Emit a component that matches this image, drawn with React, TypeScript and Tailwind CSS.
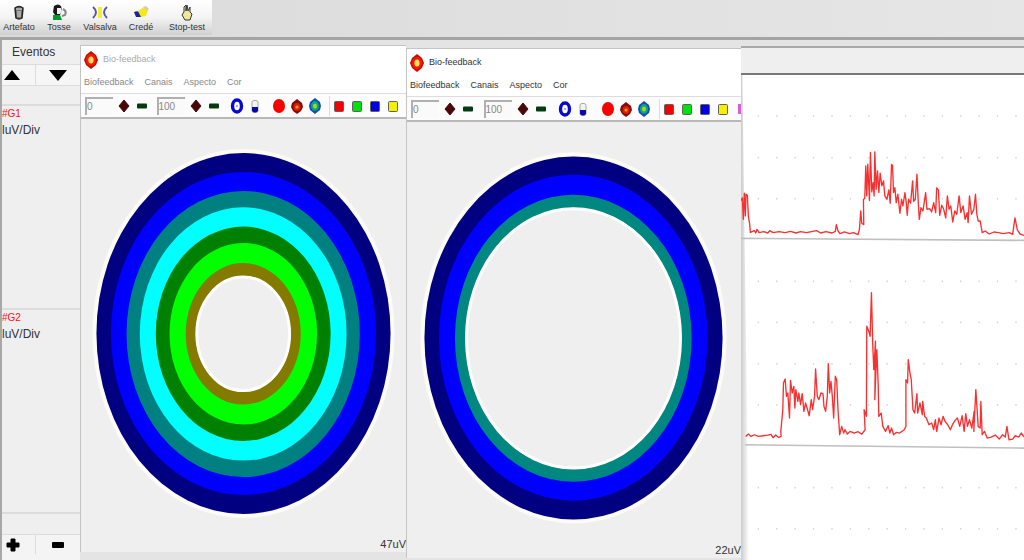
import type { ReactNode } from 'react'
import clsx from 'clsx'

type Ring = { cx: number; cy: number; rx: number; ry: number; fill: string }

const leftRings: Ring[] = [
  { cx: 163, cy: 214, rx: 147.5, ry: 181, fill: '#000080' },
  { cx: 163, cy: 214, rx: 133, ry: 162, fill: '#0000ff' },
  { cx: 162.7, cy: 214.5, rx: 117, ry: 143.5, fill: '#008080' },
  { cx: 162.7, cy: 214.5, rx: 103.7, ry: 127, fill: '#00ffff' },
  { cx: 162.7, cy: 214.3, rx: 87.7, ry: 107.5, fill: '#008000' },
  { cx: 162.8, cy: 214.3, rx: 74, ry: 91, fill: '#00ff00' },
  { cx: 162.7, cy: 214.3, rx: 57.7, ry: 71, fill: '#857a00' },
  { cx: 162.7, cy: 214.3, rx: 47.5, ry: 58, fill: '#efefef' },
]

const rightRings: Ring[] = [
  { cx: 167, cy: 216, rx: 149.5, ry: 182, fill: '#000080' },
  { cx: 166.8, cy: 215.7, rx: 134.7, ry: 163.5, fill: '#0000ff' },
  { cx: 166.8, cy: 216.3, rx: 118.7, ry: 144, fill: '#008880' },
  { cx: 167, cy: 216.3, rx: 108.3, ry: 131, fill: '#efefef' },
]

const channelOne =
  '36,484 40,476 43,540 46,462 49,530 51,465 55,468 58,530 62,555 64,579 76,574 80,581 84,570 90,580 104,577 116,581 122,574 132,580 150,577 168,580 184,576 200,581 214,577 232,580 250,576 262,574 274,581 290,577 308,581 318,576 321,556 326,575 332,583 345,578 360,583 372,580 386,586 390,570 394,515 397,552 403,556 402,480 406,478 409,380 412,470 415,375 420,484 423,340 427,458 431,430 434,470 436,338 440,450 444,395 448,460 452,402 457,440 462,425 466,470 472,480 478,452 482,492 486,376 489,378 492,460 496,445 500,490 505,465 511,522 516,480 520,500 526,460 530,490 533,528 537,480 543,492 549,425 552,486 557,480 562,405 566,490 569,540 574,505 580,515 588,460 592,510 600,508 606,518 612,490 618,520 621,446 626,452 630,528 636,498 642,510 648,536 653,470 658,510 663,500 669,548 675,515 681,525 688,470 693,520 700,500 706,540 712,520 715,550 719,470 725,525 732,510 737,465 741,525 745,545 751,545 757,580 766,575 778,584 792,578 806,580 820,583 838,580 848,585 855,536 862,572 870,584 882,588'

const channelTwo =
  '50,560 58,553 66,560 76,555 88,560 102,558 116,556 126,554 132,564 140,556 148,563 156,560 155,545 161,480 163,400 168,388 172,440 176,430 181,505 184,392 189,430 194,410 197,475 200,420 206,455 209,430 214,465 219,432 224,485 229,460 235,480 240,498 246,450 250,480 256,440 259,358 264,440 269,450 275,430 281,432 284,470 289,485 294,440 297,342 301,430 305,395 309,440 313,505 318,380 322,390 326,480 331,555 337,530 343,550 347,540 354,553 362,545 374,550 386,546 397,553 407,540 404,480 411,500 412,230 418,245 422,260 426,130 430,290 433,360 438,275 436,450 442,300 446,400 448,500 455,490 460,530 468,545 476,528 481,550 486,535 492,555 500,548 510,550 524,540 529,530 529,390 534,400 536,330 541,370 545,390 550,480 555,490 562,432 564,490 571,460 578,495 579,455 585,500 590,505 598,525 606,520 612,540 617,510 621,545 628,505 634,525 640,500 646,515 654,525 662,540 668,525 676,512 683,505 690,530 697,498 703,545 708,492 713,530 719,510 726,535 733,485 732,545 738,420 745,530 751,535 753,455 757,555 764,545 772,565 784,562 796,556 808,568 818,555 826,562 831,530 837,570 848,568 856,558 866,562 874,550 882,562'

const gridRows = [120, 245, 368, 615, 738, 862, 985, 1233, 1356]
const gridColumns = Array.from({ length: 16 }, (_, i) => 50 + i * 55)

function RoundLogo() {
  return (
    <svg viewBox="0 0 16 18" className="h-[18px] w-4 shrink-0">
      <path d="M8 0 13 4 15 9 13 14 8 18 3 14 1 9 3 4Z" fill="#c01008" />
      <ellipse cx="8" cy="9" rx="5" ry="6" fill="#ff1800" />
      <ellipse cx="8" cy="9" rx="2.6" ry="3.6" fill="#ffe060" />
    </svg>
  )
}

function ToolButton({ label, children }: { label: string; children: ReactNode }) {
  return (
    <button aria-label={label} className="flex h-5 w-[18px] shrink-0 items-center justify-center">
      <svg viewBox="0 0 16 18" className="h-[18px] w-4">
        {children}
      </svg>
    </button>
  )
}

function Stepper({ label, value }: { label: string; value: string }) {
  return (
    <div className="flex items-center">
      <input
        aria-label={label}
        defaultValue={value}
        className="mr-0.5 h-[18px] w-7 border-t-2 border-l-2 border-[#b0b0b0] bg-[#fafafa] text-[10px] text-[#888]"
      />
      <ToolButton label={`${label} +`}>
        <path d="M8 3 13 9 8 15 3 9Z" fill="#480808" stroke="#480808" strokeLinejoin="round" />
      </ToolButton>
      <ToolButton label={`${label} -`}>
        <rect x="3" y="6.5" width="10" height="5" rx="1" fill="#003c10" />
      </ToolButton>
    </div>
  )
}

function Swatch({ label, fill }: { label: string; fill: string }) {
  return (
    <ToolButton label={label}>
      <rect x="3.5" y="4.5" width="9" height="10" rx="1" fill={fill} stroke="#606060" />
    </ToolButton>
  )
}

type WindowProps = {
  rings: Ring[]
  reading: string
  viewBox: string
  active?: boolean
  className?: string
}

function FeedbackWindow({ rings, reading, viewBox, active, className }: WindowProps) {
  const outer = rings[0]
  const inner = rings[rings.length - 1]

  return (
    <section
      className={clsx(
        'flex min-h-0 min-w-0 flex-col overflow-hidden border-t border-l border-[#c4c4c4] bg-[#efefef]',
        className,
      )}
    >
      <header className="flex h-[27px] shrink-0 items-center gap-1 bg-white pl-0.5">
        <RoundLogo />
        <h2 className={clsx('text-[9px]', active ? 'text-[#333]' : 'text-[#aaa]')}>Bio-feedback</h2>
      </header>
      <nav
        className={clsx(
          'flex h-[21px] shrink-0 items-center gap-[11px] border-b border-[#ddd] bg-white pl-[3px] text-[9px]',
          active ? 'text-[#333]' : 'text-[#888]',
        )}
      >
        <button>Biofeedback</button>
        <button>Canais</button>
        <button>Aspecto</button>
        <button>Cor</button>
      </nav>
      <div className="flex h-[25px] shrink-0 items-center border-b-2 border-[#b8b8b8] bg-[#fcfcfc] pl-1">
        <div className="flex min-w-0 flex-1 items-center justify-between">
          <Stepper label="Mínimo" value="0" />
          <Stepper label="Máximo" value="100" />
          <div className="flex">
            <ToolButton label="Anel">
              <ellipse cx="8" cy="9" rx="4.5" ry="6" fill="#fff" stroke="#0808d0" strokeWidth="3.4" />
              <circle cx="8" cy="9" r="1.2" fill="#aaaaff" />
            </ToolButton>
            <ToolButton label="Barra">
              <rect x="5" y="3.5" width="6" height="12" rx="2" fill="#f4f4e8" stroke="#a8a8a8" />
              <path d="M5 10h6v4q-3 3-6 0Z" fill="#0808b0" />
            </ToolButton>
          </div>
          <div className="flex">
            <ToolButton label="Cor sólida">
              <ellipse cx="8" cy="9" rx="6" ry="7" fill="#f80000" />
            </ToolButton>
            <ToolButton label="Tons">
              <path d="M8 2 13 6 14 10 12 14 8 17 4 14 2 10 3 6Z" fill="#880808" />
              <ellipse cx="8" cy="10" rx="3.5" ry="4" fill="#d82000" />
              <circle cx="8" cy="10" r="1.6" fill="#ff9830" />
            </ToolButton>
            <ToolButton label="Multicor">
              <path d="M8 1 13 5 14 9 13 13 8 17 3 13 2 9 3 5Z" fill="#1848c0" />
              <ellipse cx="8" cy="9" rx="4" ry="5" fill="#08a878" />
              <ellipse cx="8" cy="9" rx="2" ry="2.6" fill="#a0d820" />
            </ToolButton>
          </div>
          <div className="flex border-l border-[#ddd]">
            <Swatch label="Vermelho" fill="#f80000" />
            <Swatch label="Verde" fill="#00e010" />
            <Swatch label="Azul" fill="#0000e0" />
            <Swatch label="Amarelo" fill="#f4f000" />
          </div>
        </div>
        {active ? (
          <button aria-label="Rosa" className="ml-1.5 h-2.5 w-[3px] shrink-0 bg-[#d860d0]" />
        ) : (
          <span className="w-1 shrink-0" />
        )}
      </div>
      <svg viewBox={viewBox} className="min-h-0 w-full flex-1">
        <ellipse cx={outer.cx} cy={outer.cy} rx={outer.rx + 2} ry={outer.ry + 2} fill="none" stroke="#fcfcf4" strokeWidth="4" />
        {rings.map((ring) => (
          <ellipse key={ring.rx} {...ring} />
        ))}
        <ellipse cx={inner.cx} cy={inner.cy} rx={inner.rx - 1} ry={inner.ry - 1} fill="none" stroke="#fff" strokeWidth="3" />
      </svg>
      <footer className="h-4 shrink-0 text-right text-[11px] leading-4 text-[#333]">{reading}</footer>
    </section>
  )
}

function Channel({ name }: { name: string }) {
  return (
    <div className="min-h-0 flex-1 border-t-2 border-[#dcdcdc] pt-0.5">
      <div className="text-[10px] leading-3 text-[#ff1010]">{name}</div>
      <div className="text-xs leading-5 text-[#333]">luV/Div</div>
    </div>
  )
}

function Sidebar() {
  return (
    <aside className="flex min-h-0 flex-col border-l-2 border-[#a8a8a8] bg-[#efefef]">
      <h1 className="h-6 shrink-0 pl-2.5 text-xs leading-6 text-[#333]">Eventos</h1>
      <div className="grid h-[22px] shrink-0 grid-cols-[34px_1fr] border-y border-[#ddd] bg-[#f6f6f6]">
        <button aria-label="Subir" className="flex items-center border-r border-[#ddd] pl-0.5">
          <svg viewBox="0 0 16 12" className="h-3 w-4">
            <path d="M8 1 16 11H0Z" />
          </svg>
        </button>
        <button aria-label="Descer" className="flex items-center justify-center">
          <svg viewBox="0 0 18 12" className="h-3 w-[18px]">
            <path d="M0 1h18L9 12Z" />
          </svg>
        </button>
      </div>
      <div className="mt-[18px] flex min-h-0 flex-1 flex-col">
        <Channel name="#G1" />
        <Channel name="#G2" />
      </div>
      <div className="h-[22px] shrink-0 border-t-2 border-[#dcdcdc]" />
      <div className="grid h-[26px] shrink-0 grid-cols-[34px_1fr] border-t border-[#ddd] bg-[#f4f4f4] pb-1.5">
        <button aria-label="Aumentar" className="flex items-center border-r border-[#ddd] pl-1">
          <svg viewBox="0 0 14 16" className="h-4 w-3.5">
            <path d="M5 2h4v4h4v4H9v4H5v-4H1V6h4Z" stroke="#000" strokeLinejoin="round" />
          </svg>
        </button>
        <button aria-label="Diminuir" className="flex items-center justify-center">
          <svg viewBox="0 0 14 16" className="h-4 w-3.5">
            <rect x="1" y="5" width="12" height="6" rx="1" />
          </svg>
        </button>
      </div>
    </aside>
  )
}

function SignalChart() {
  return (
    <section className="mt-1.5 flex min-h-0 min-w-0 flex-col border-t-2 border-[#a8a8a8] bg-white">
      <div className="h-[27px] shrink-0 border-b-2 border-[#777] bg-[#efefef]" />
      <svg viewBox="0 0 846 1452" preserveAspectRatio="none" className="min-h-0 w-full flex-1">
        <defs>
          <linearGradient id="edge">
            <stop offset="0" stopColor="#c8c8c8" />
            <stop offset="1" stopColor="#fff" />
          </linearGradient>
        </defs>
        <path d="M-2 0H4L24 1452H-2Z" fill="url(#edge)" />
        {gridRows.map((y) =>
          gridColumns.map((x) => <rect key={`${x}-${y}`} x={x} y={y} width="4" height="5" fill="#d4d4d4" />),
        )}
        <path d="M0 489 846 495M12 1107 846 1117" stroke="#c0c0c0" strokeWidth="5" />
        <g fill="none" stroke="#f83030" strokeWidth="4" strokeLinejoin="round">
          <polyline points={channelOne} transform="translate(-36 -108)" />
          <polyline points={channelTwo} transform="translate(-36 522)" />
        </g>
      </svg>
    </section>
  )
}

function EventButton({ label, children }: { label: string; children: ReactNode }) {
  return (
    <button className="flex flex-col items-center justify-center text-[9px] leading-3 text-[#333]">
      <svg viewBox="0 0 18 18" className="h-[18px] w-[18px]">
        {children}
      </svg>
      {label}
    </button>
  )
}

export default function App() {
  return (
    <div className="flex h-screen min-h-[480px] flex-col overflow-hidden bg-[#e4e4e4] font-['Liberation_Sans',Arial,sans-serif]">
      <div className="h-10 shrink-0 border-b-[3px] border-[#a4a4a4] bg-linear-to-r from-[#dadada] to-[#e6e6e6] pb-0.5">
        <div className="grid h-full w-[212px] grid-cols-[38px_42px_40px_42px_50px] bg-linear-to-b from-white via-[#f4f4f4] to-[#d0d0d0]">
          <EventButton label="Artefato">
            <path d="M5 5q4-3 8 0l-1 10q-3 2-6 0Z" fill="#777" stroke="#222" strokeWidth="1.5" />
            <path d="M6 6h6M8 8v6M10 8v6" stroke="#ddd" />
          </EventButton>
          <EventButton label="Tosse">
            <path d="M4 3q4-3 7 0l1 4-2 5H5L3 9Z" fill="#181818" />
            <path d="M7 5h4l1 3-2 3H7Z" fill="#f0f0f0" />
            <path d="M3 12h7l2 5H3Z" fill="#009a28" />
            <path d="M13 6q4 2 2 6l-3 1" fill="none" stroke="#888" strokeWidth="2" />
          </EventButton>
          <EventButton label="Valsalva">
            <rect x="7" y="4" width="4" height="11" fill="#f6ec30" />
            <path d="M2 4q6 5 0 11M16 4q-6 5 0 11" fill="none" stroke="#5858a8" strokeWidth="2" />
          </EventButton>
          <EventButton label="Credé">
            <path d="M2 9q4-2 7 1v4H4Z" fill="#202098" />
            <path d="M6 8l6-4 4 3-2 6-5 1Z" fill="#f4e818" />
            <path d="M11 4l3-1 3 3-2 2" fill="#d0d0a0" />
          </EventButton>
          <EventButton label="Stop-test">
            <path d="M6 9V4l2-2v6l1-6 1 6 2-4v5l2 2-2 6H7l-3-5Z" fill="#eee89a" stroke="#333" />
          </EventButton>
        </div>
      </div>
      <main className="grid min-h-0 flex-1 grid-cols-[80px_326fr_335fr_283fr] grid-rows-[minmax(0,1fr)]">
        <Sidebar />
        <FeedbackWindow rings={leftRings} reading="47uV" viewBox="0 0 326 416" className="mt-[5px] mb-2" />
        <FeedbackWindow rings={rightRings} reading="22uV" viewBox="0 0 335 420" active className="mt-2 mb-0.5" />
        <SignalChart />
      </main>
    </div>
  )
}
